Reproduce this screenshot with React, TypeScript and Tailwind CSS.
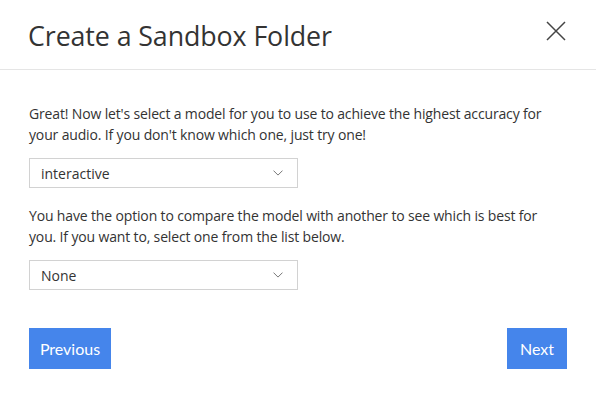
import React from "react";

function Chevron() {
  return (
    <svg width="10" height="6" viewBox="0 0 10 6" fill="none">
      <path d="M0.5 0.6 L5 5.1 L9.5 0.6" stroke="#777" strokeWidth="1" />
    </svg>
  );
}

function Select({ value }: { value: string }) {
  return (
    <div className="flex h-[30px] w-[269px] items-center justify-between border border-[#d2d2d2] bg-white pl-[11px] pr-[14px] text-[14px] text-[#333]">
      <span>{value}</span>
      <Chevron />
    </div>
  );
}

export default function App() {
  return (
    <div
      className="h-[404px] w-[596px] bg-white text-[#333]"
      style={{ fontFamily: "'Open Sans', 'Noto Sans', sans-serif" }}
    >
      <div className="flex h-[70px] items-center justify-between border-b border-[#e5e5e5] pl-[28px] pr-[30px]">
        <h1 className="pt-[3px] text-[26.8px] font-normal tracking-[-0.1px] text-[#333]">Create a Sandbox Folder</h1>
        <svg width="20" height="20" viewBox="0 0 20 20" className="mt-[-8px]">
          <path d="M1 1 L19 19 M19 1 L1 19" stroke="#444" strokeWidth="1.5" />
        </svg>
      </div>
      <div className="px-[29px] pt-[33px]">
        <p className="text-[14px] leading-[21px] tracking-[-0.15px]">
          Great! Now let's select a model for you to use to achieve the highest accuracy for your audio. If you don't know which one, just try one!
        </p>
        <div className="mt-[13px]">
          <Select value="interactive" />
        </div>
        <p className="mt-[17px] text-[14px] leading-[21px] tracking-[-0.15px]">
          You have the option to compare the model with another to see which is best for you. If you want to, select one from the list below.
        </p>
        <div className="mt-[13px]">
          <Select value="None" />
        </div>
        <div className="mt-[38px] flex justify-between">
          <button className="h-[41px] w-[82px] bg-[#4585eb] text-[16px] text-white" style={{ fontFamily: "Lato, sans-serif" }}>
            Previous
          </button>
          <button className="h-[41px] w-[60px] bg-[#4585eb] text-[16px] text-white" style={{ fontFamily: "Lato, sans-serif" }}>
            Next
          </button>
        </div>
      </div>
    </div>
  );
}
